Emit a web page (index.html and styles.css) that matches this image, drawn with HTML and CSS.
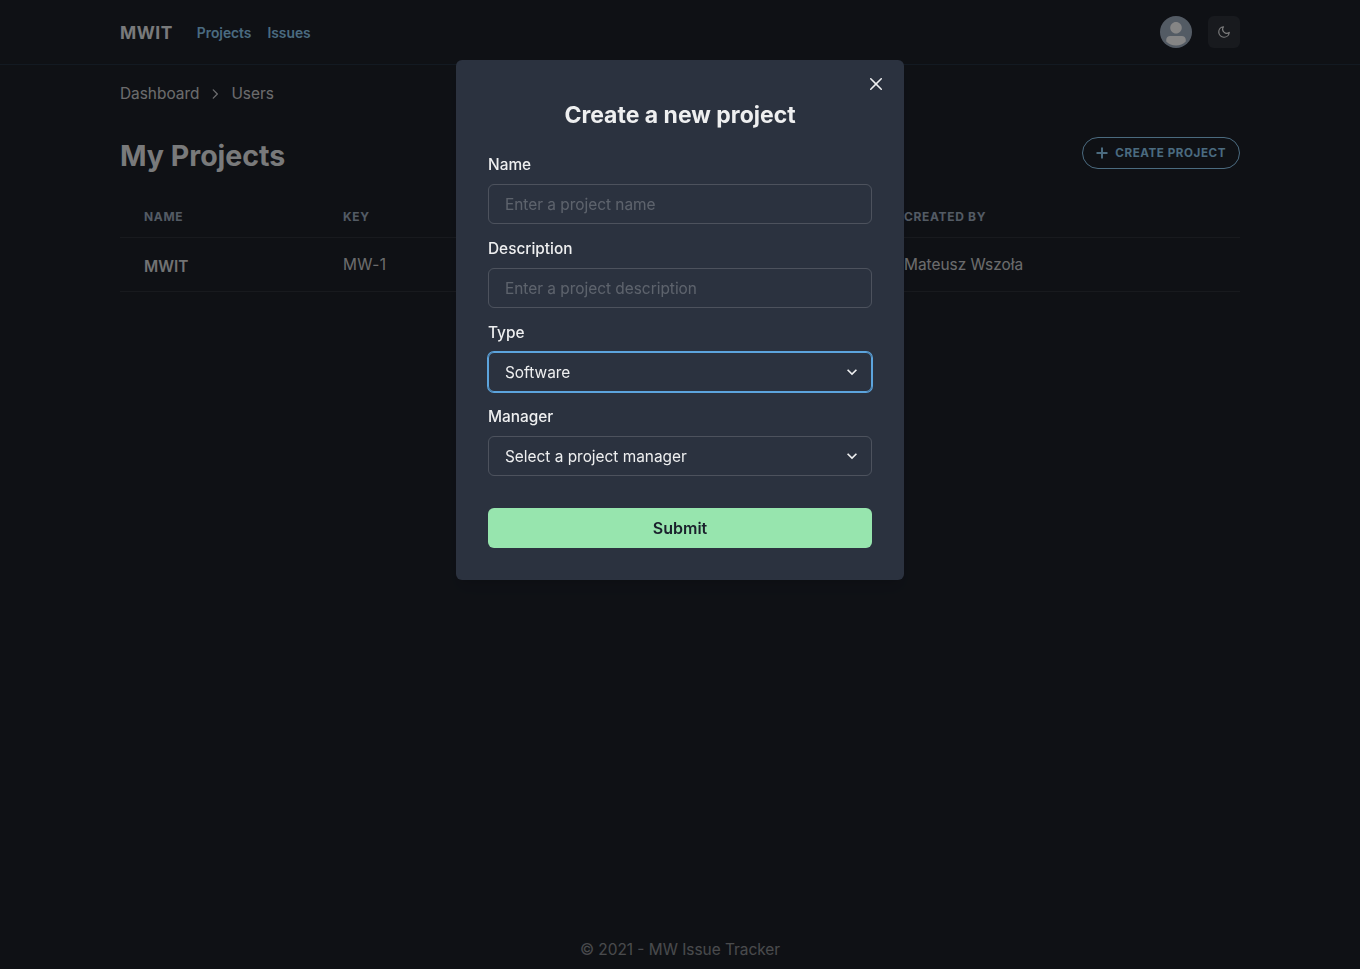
FILE: index.html
```html
<!DOCTYPE html>
<html lang="en">
<head>
    <meta charset="UTF-8">
    <meta name="viewport" content="width=device-width, initial-scale=1.0">
    <title>MW Issue Tracker</title>
    <link rel="stylesheet" href="styles.css">
</head>
<body>
    <header class="navbar">
        <div class="container navbar-inner">
            <div class="navbar-left">
                <a class="logo" href="#">MWIT</a>
                <nav class="nav-links">
                    <a href="#">Projects</a>
                    <a href="#">Issues</a>
                </nav>
            </div>
            <div class="navbar-right">
                <span class="avatar">
                    <svg viewBox="0 0 128 128" width="32" height="32" fill="#fff">
                        <path d="M103,102.1388 C93.094,111.92 79.3504,118 64.1638,118 C48.8056,118 34.9294,111.768 25,101.7892 L25,95.2 C25,86.8096 31.981,80 40.6,80 L87.4,80 C96.019,80 103,86.8096 103,95.2 L103,102.1388 Z"></path>
                        <path d="M63.9961647,24 C51.2938136,24 41,34.2938136 41,46.9961647 C41,59.7061864 51.2938136,70 63.9961647,70 C76.6985159,70 87,59.7061864 87,46.9961647 C87,34.2938136 76.6985159,24 63.9961647,24 Z"></path>
                    </svg>
                </span>
                <button class="theme-toggle" type="button" aria-label="Toggle theme">
                    <svg viewBox="0 0 24 24" width="14" height="14" fill="none" stroke="currentColor" stroke-width="2" stroke-linecap="round" stroke-linejoin="round">
                        <path d="M21 12.79A9 9 0 1 1 11.21 3 7 7 0 0 0 21 12.79z"></path>
                    </svg>
                </button>
            </div>
        </div>
    </header>

    <main class="container content">
        <div class="breadcrumb">
            <a href="#">Dashboard</a>
            <svg class="breadcrumb-sep" viewBox="0 0 24 24" width="14" height="14" fill="none" stroke="currentColor" stroke-width="2.2" stroke-linecap="round" stroke-linejoin="round">
                <path d="M9 5l7 7-7 7"></path>
            </svg>
            <a href="#">Users</a>
        </div>

        <div class="page-head">
            <h1>My Projects</h1>
            <button class="btn-create" type="button">
                <svg viewBox="0 0 24 24" width="12" height="12" fill="currentColor">
                    <path d="M10 1h4v9h9v4h-9v9h-4v-9H1v-4h9z"></path>
                </svg>
                <span>Create project</span>
            </button>
        </div>

        <table class="projects">
            <colgroup>
                <col class="col-name">
                <col class="col-key">
                <col>
            </colgroup>
            <thead>
                <tr>
                    <th>Name</th>
                    <th>Key</th>
                    <th>Created by</th>
                </tr>
            </thead>
            <tbody>
                <tr>
                    <td class="project-name">MWIT</td>
                    <td class="project-key">MW-1</td>
                    <td>Mateusz Wszoła</td>
                </tr>
            </tbody>
        </table>
    </main>

    <footer class="footer">© 2021 - MW Issue Tracker</footer>

    <div class="overlay">
        <div class="modal">
            <button class="modal-close" type="button" aria-label="Close">
                <svg viewBox="0 0 24 24" width="12" height="12" fill="currentColor">
                    <path d="M.439,21.44a1.5,1.5,0,0,0,2.122,2.121L11.823,14.3a.25.25,0,0,1,.354,0l9.262,9.263a1.5,1.5,0,1,0,2.122-2.121L14.3,12.177a.25.25,0,0,1,0-.354l9.263-9.262A1.5,1.5,0,0,0,21.439.44L12.177,9.7a.25.25,0,0,1-.354,0L2.561.44A1.5,1.5,0,0,0,.439,2.561L9.7,11.823a.25.25,0,0,1,0,.354Z"></path>
                </svg>
            </button>
            <h2>Create a new project</h2>
            <form class="project-form">
                <div class="field">
                    <label for="name">Name</label>
                    <input type="text" id="name" placeholder="Enter a project name">
                </div>
                <div class="field">
                    <label for="description">Description</label>
                    <input type="text" id="description" placeholder="Enter a project description">
                </div>
                <div class="field">
                    <label for="type">Type</label>
                    <div class="select-wrap">
                        <select id="type" class="is-focused">
                            <option>Software</option>
                        </select>
                        <svg class="select-icon" viewBox="0 0 24 24" width="20" height="20" fill="currentColor">
                            <path d="M16.59 8.59L12 13.17 7.41 8.59 6 10l6 6 6-6z"></path>
                        </svg>
                    </div>
                </div>
                <div class="field">
                    <label for="manager">Manager</label>
                    <div class="select-wrap">
                        <select id="manager">
                            <option>Select a project manager</option>
                        </select>
                        <svg class="select-icon" viewBox="0 0 24 24" width="20" height="20" fill="currentColor">
                            <path d="M16.59 8.59L12 13.17 7.41 8.59 6 10l6 6 6-6z"></path>
                        </svg>
                    </div>
                </div>
                <button class="btn-submit" type="submit">Submit</button>
            </form>
        </div>
    </div>
</body>
</html>
```

FILE: styles.css
```css
* {
    box-sizing: border-box;
}

body {
    font-family: Inter, "Liberation Sans", sans-serif;
    font-size: 15.4px;
    line-height: 24px;
    margin: 0;
    min-height: 100vh;
    display: flex;
    flex-direction: column;
    background-color: #1d212a;
    color: rgba(255, 255, 255, 0.92);
}

a {
    color: inherit;
    text-decoration: none;
}

button {
    font-family: inherit;
    cursor: pointer;
}

.container {
    width: 1120px;
    margin: 0 auto;
}

.navbar {
    height: 65px;
    border-bottom: 1px solid rgba(99, 179, 237, 0.12);
}

.navbar-inner {
    height: 64px;
    display: flex;
    justify-content: space-between;
    align-items: center;
}

.navbar-left,
.navbar-right {
    display: flex;
    align-items: center;
}

.navbar-left {
    padding-top: 2px;
}

.logo {
    font-size: 17.4px;
    font-weight: 700;
    letter-spacing: 0.03em;
    margin-right: 24px;
}

.nav-links {
    display: flex;
    gap: 16px;
    font-size: 13.8px;
    font-weight: 600;
    color: #90cdf4;
}

.navbar-right {
    gap: 16px;
}

.avatar {
    width: 32px;
    height: 32px;
    border-radius: 50%;
    overflow: hidden;
    background-color: #a0aec0;
}

.avatar svg {
    display: block;
}

.theme-toggle {
    width: 32px;
    height: 32px;
    padding: 0;
    display: flex;
    justify-content: center;
    align-items: center;
    border: none;
    border-radius: 6px;
    background-color: rgba(255, 255, 255, 0.08);
    color: rgba(255, 255, 255, 0.92);
}

.content {
    padding-top: 17px;
}

.breadcrumb {
    display: flex;
    align-items: center;
    color: rgba(255, 255, 255, 0.8);
}

.breadcrumb-sep {
    margin: 0 9px;
}

.page-head {
    display: flex;
    justify-content: space-between;
    align-items: flex-start;
    margin-top: 31px;
    margin-bottom: 24px;
}

h1 {
    font-size: 28.5px;
    line-height: 36px;
    font-weight: 700;
    padding-top: 1px;
    margin: 0 0 -1px;
}

.btn-create {
    height: 32px;
    padding: 0 13px;
    display: flex;
    align-items: center;
    gap: 7px;
    background: transparent;
    border: 1px solid #90cdf4;
    border-radius: 16px;
    color: #90cdf4;
    font-size: 11.6px;
    font-weight: 700;
    letter-spacing: 0.05em;
    text-transform: uppercase;
}

.projects {
    width: 100%;
    table-layout: fixed;
    border-collapse: collapse;
}

.col-name {
    width: 199px;
}

.col-key {
    width: 561px;
}

.projects th {
    padding: 12px 24px;
    font-size: 12px;
    line-height: 16px;
    font-weight: 700;
    letter-spacing: 0.055em;
    text-align: left;
    text-transform: uppercase;
    color: #a0aec0;
    border-bottom: 1px solid rgba(255, 255, 255, 0.08);
}

.projects td {
    padding: 15px 24px 14px;
    vertical-align: top;
    color: rgba(255, 255, 255, 0.8);
    border-bottom: 1px solid rgba(255, 255, 255, 0.08);
}

.projects td.project-name {
    padding-top: 17px;
    padding-bottom: 12px;
    font-weight: 600;
    color: rgba(255, 255, 255, 0.85);
}

.projects td.project-key {
    letter-spacing: 0.03em;
}

.footer {
    margin-top: auto;
    padding-bottom: 7px;
    text-align: center;
    color: rgba(255, 255, 255, 0.5);
}

.overlay {
    position: fixed;
    top: 0;
    left: 0;
    width: 100%;
    height: 100%;
    display: flex;
    justify-content: center;
    align-items: flex-start;
    background-color: rgba(0, 0, 0, 0.48);
}

.modal {
    position: relative;
    width: 448px;
    margin-top: 60px;
    padding: 37px 32px 32px;
    background-color: #2b323f;
    border-radius: 6px;
    box-shadow: 0 10px 15px -3px rgba(0, 0, 0, 0.1), 0 4px 6px -2px rgba(0, 0, 0, 0.05);
}

.modal-close {
    position: absolute;
    top: 12px;
    right: 12px;
    width: 32px;
    height: 24px;
    padding: 0;
    display: flex;
    justify-content: center;
    align-items: center;
    background: transparent;
    border: none;
    color: rgba(255, 255, 255, 0.92);
}

.modal h2 {
    font-size: 23px;
    line-height: 36px;
    font-weight: 700;
    text-align: center;
    margin: 0 0 20px;
}

.project-form {
    display: flex;
    flex-direction: column;
    gap: 12px;
}

.field label {
    display: block;
    font-weight: 500;
    margin-bottom: 7px;
    margin-top: 1px;
}

.project-form .field:first-child label {
    margin-top: 0;
}

.field input,
.field select {
    display: block;
    width: 100%;
    height: 40px;
    padding: 0 16px;
    font-family: inherit;
    font-size: 15.4px;
    color: rgba(255, 255, 255, 0.92);
    background: transparent;
    border: 1px solid rgba(255, 255, 255, 0.16);
    border-radius: 6px;
    outline: none;
}

.field input::placeholder {
    color: rgba(255, 255, 255, 0.24);
    opacity: 1;
}

.field select {
    appearance: none;
    padding-right: 32px;
}

.field select.is-focused {
    border-color: #5ca4dd;
    box-shadow: 0 0 0 1px #5ca4dd;
}

.select-wrap {
    position: relative;
}

.select-icon {
    position: absolute;
    top: 10px;
    right: 10px;
    pointer-events: none;
}

.btn-submit {
    height: 40px;
    margin-top: 20px;
    border: none;
    border-radius: 6px;
    background-color: #97e5ae;
    color: #1a202c;
    font-size: 16px;
    font-weight: 600;
}
```
